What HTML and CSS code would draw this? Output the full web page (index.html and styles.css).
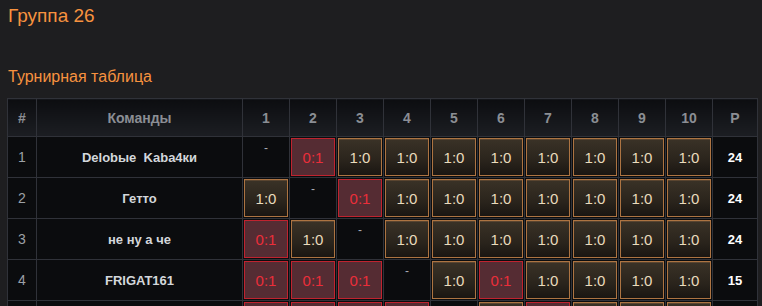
FILE: index.html
```html
<!DOCTYPE html>
<html lang="ru">
<head>
<meta charset="utf-8">
<link rel="stylesheet" href="styles.css">
</head>
<body>
<h1 class="title">Группа 26</h1>
<h2 class="subtitle">Турнирная таблица</h2>
<table class="standings">
  <colgroup>
    <col class="c-num"><col class="c-team">
    <col class="c-g"><col class="c-g"><col class="c-g"><col class="c-g"><col class="c-g">
    <col class="c-g"><col class="c-g"><col class="c-g"><col class="c-g"><col class="c-g">
    <col class="c-pts">
  </colgroup>
  <thead>
    <tr>
      <th>#</th><th>Команды</th>
      <th>1</th><th>2</th><th>3</th><th>4</th><th>5</th><th>6</th><th>7</th><th>8</th><th>9</th><th>10</th>
      <th>P</th>
    </tr>
  </thead>
  <tbody>
    <tr>
      <td class="num">1</td><td class="team">Delobые&nbsp; Kaba4ки</td>
      <td class="self">-</td>
      <td><div class="res loss">0:1</div></td>
      <td><div class="res win">1:0</div></td>
      <td><div class="res win">1:0</div></td>
      <td><div class="res win">1:0</div></td>
      <td><div class="res win">1:0</div></td>
      <td><div class="res win">1:0</div></td>
      <td><div class="res win">1:0</div></td>
      <td><div class="res win">1:0</div></td>
      <td><div class="res win">1:0</div></td>
      <td class="pts">24</td>
    </tr>
    <tr>
      <td class="num">2</td><td class="team">Гетто</td>
      <td><div class="res win">1:0</div></td>
      <td class="self">-</td>
      <td><div class="res loss">0:1</div></td>
      <td><div class="res win">1:0</div></td>
      <td><div class="res win">1:0</div></td>
      <td><div class="res win">1:0</div></td>
      <td><div class="res win">1:0</div></td>
      <td><div class="res win">1:0</div></td>
      <td><div class="res win">1:0</div></td>
      <td><div class="res win">1:0</div></td>
      <td class="pts">24</td>
    </tr>
    <tr>
      <td class="num">3</td><td class="team">не ну а че</td>
      <td><div class="res loss">0:1</div></td>
      <td><div class="res win">1:0</div></td>
      <td class="self">-</td>
      <td><div class="res win">1:0</div></td>
      <td><div class="res win">1:0</div></td>
      <td><div class="res win">1:0</div></td>
      <td><div class="res win">1:0</div></td>
      <td><div class="res win">1:0</div></td>
      <td><div class="res win">1:0</div></td>
      <td><div class="res win">1:0</div></td>
      <td class="pts">24</td>
    </tr>
    <tr>
      <td class="num">4</td><td class="team">FRIGAT161</td>
      <td><div class="res loss">0:1</div></td>
      <td><div class="res loss">0:1</div></td>
      <td><div class="res loss">0:1</div></td>
      <td class="self">-</td>
      <td><div class="res win">1:0</div></td>
      <td><div class="res loss">0:1</div></td>
      <td><div class="res win">1:0</div></td>
      <td><div class="res win">1:0</div></td>
      <td><div class="res win">1:0</div></td>
      <td><div class="res win">1:0</div></td>
      <td class="pts">15</td>
    </tr>
    <tr class="partial">
      <td class="num"></td><td class="team"></td>
      <td><div class="res loss"></div></td>
      <td><div class="res loss"></div></td>
      <td><div class="res loss"></div></td>
      <td><div class="res loss"></div></td>
      <td class="self"></td>
      <td><div class="res win"></div></td>
      <td><div class="res loss"></div></td>
      <td><div class="res win"></div></td>
      <td><div class="res win"></div></td>
      <td><div class="res win"></div></td>
      <td class="pts"></td>
    </tr>
  </tbody>
</table>
</body>
</html>
```
FILE: styles.css
```css
html, body {
  margin: 0;
  padding: 0;
  background: #1e1e20;
  height: 306px;
  overflow: hidden;
}
body {
  font-family: "Liberation Sans", Arial, sans-serif;
  padding: 4px 0 0 7px;
  box-sizing: border-box;
}
.title {
  margin: 0 0 0 1px;
  font-weight: normal;
  font-size: 19px;
  line-height: 24px;
  color: #f7923f;
}
.subtitle {
  margin: 38px 0 0 1px;
  font-weight: normal;
  font-size: 16px;
  line-height: 21px;
  color: #f7923f;
}
.standings {
  margin-top: 11px;
  border-collapse: collapse;
  table-layout: fixed;
  width: 750px;
  background: #0b0c0e;
  border: 1px solid #3a3b42;
}
.c-num { width: 29px; }
.c-team { width: 206px; }
.c-g { width: 47px; }
.c-pts { width: 45px; }
.standings th, .standings td {
  border: 1px solid #303239;
  padding: 0;
  text-align: center;
}
.standings th {
  height: 37px;
  background: linear-gradient(#0c0d10, #1c1e23);
  color: #8b8e94;
  font-size: 14px;
  font-weight: bold;
}
.standings td {
  height: 40px;
  vertical-align: middle;
}
.num {
  color: #9da1a7;
  font-size: 14px;
}
.team {
  color: #d3d7db;
  font-size: 13px;
  font-weight: bold;
}
.pts {
  color: #ffffff;
  font-size: 13px;
  font-weight: bold;
}
.standings td.self {
  vertical-align: top;
  color: #a8adb3;
  font-size: 12px;
  line-height: 22px;
}
.res {
  box-sizing: border-box;
  width: 44px;
  height: 38px;
  margin: 0 auto;
  font-size: 15px;
  line-height: 37px;
}
.win {
  border: 1px solid #ad7442;
  box-shadow: inset 0 1px 0 #5a4530;
  background: linear-gradient(#3a3227, #2a241c 60%, #1a1612);
  color: #eadbbd;
}
.loss {
  border: 1px solid #c0232f;
  background: #552c33;
  color: #ea2e3a;
}
```
